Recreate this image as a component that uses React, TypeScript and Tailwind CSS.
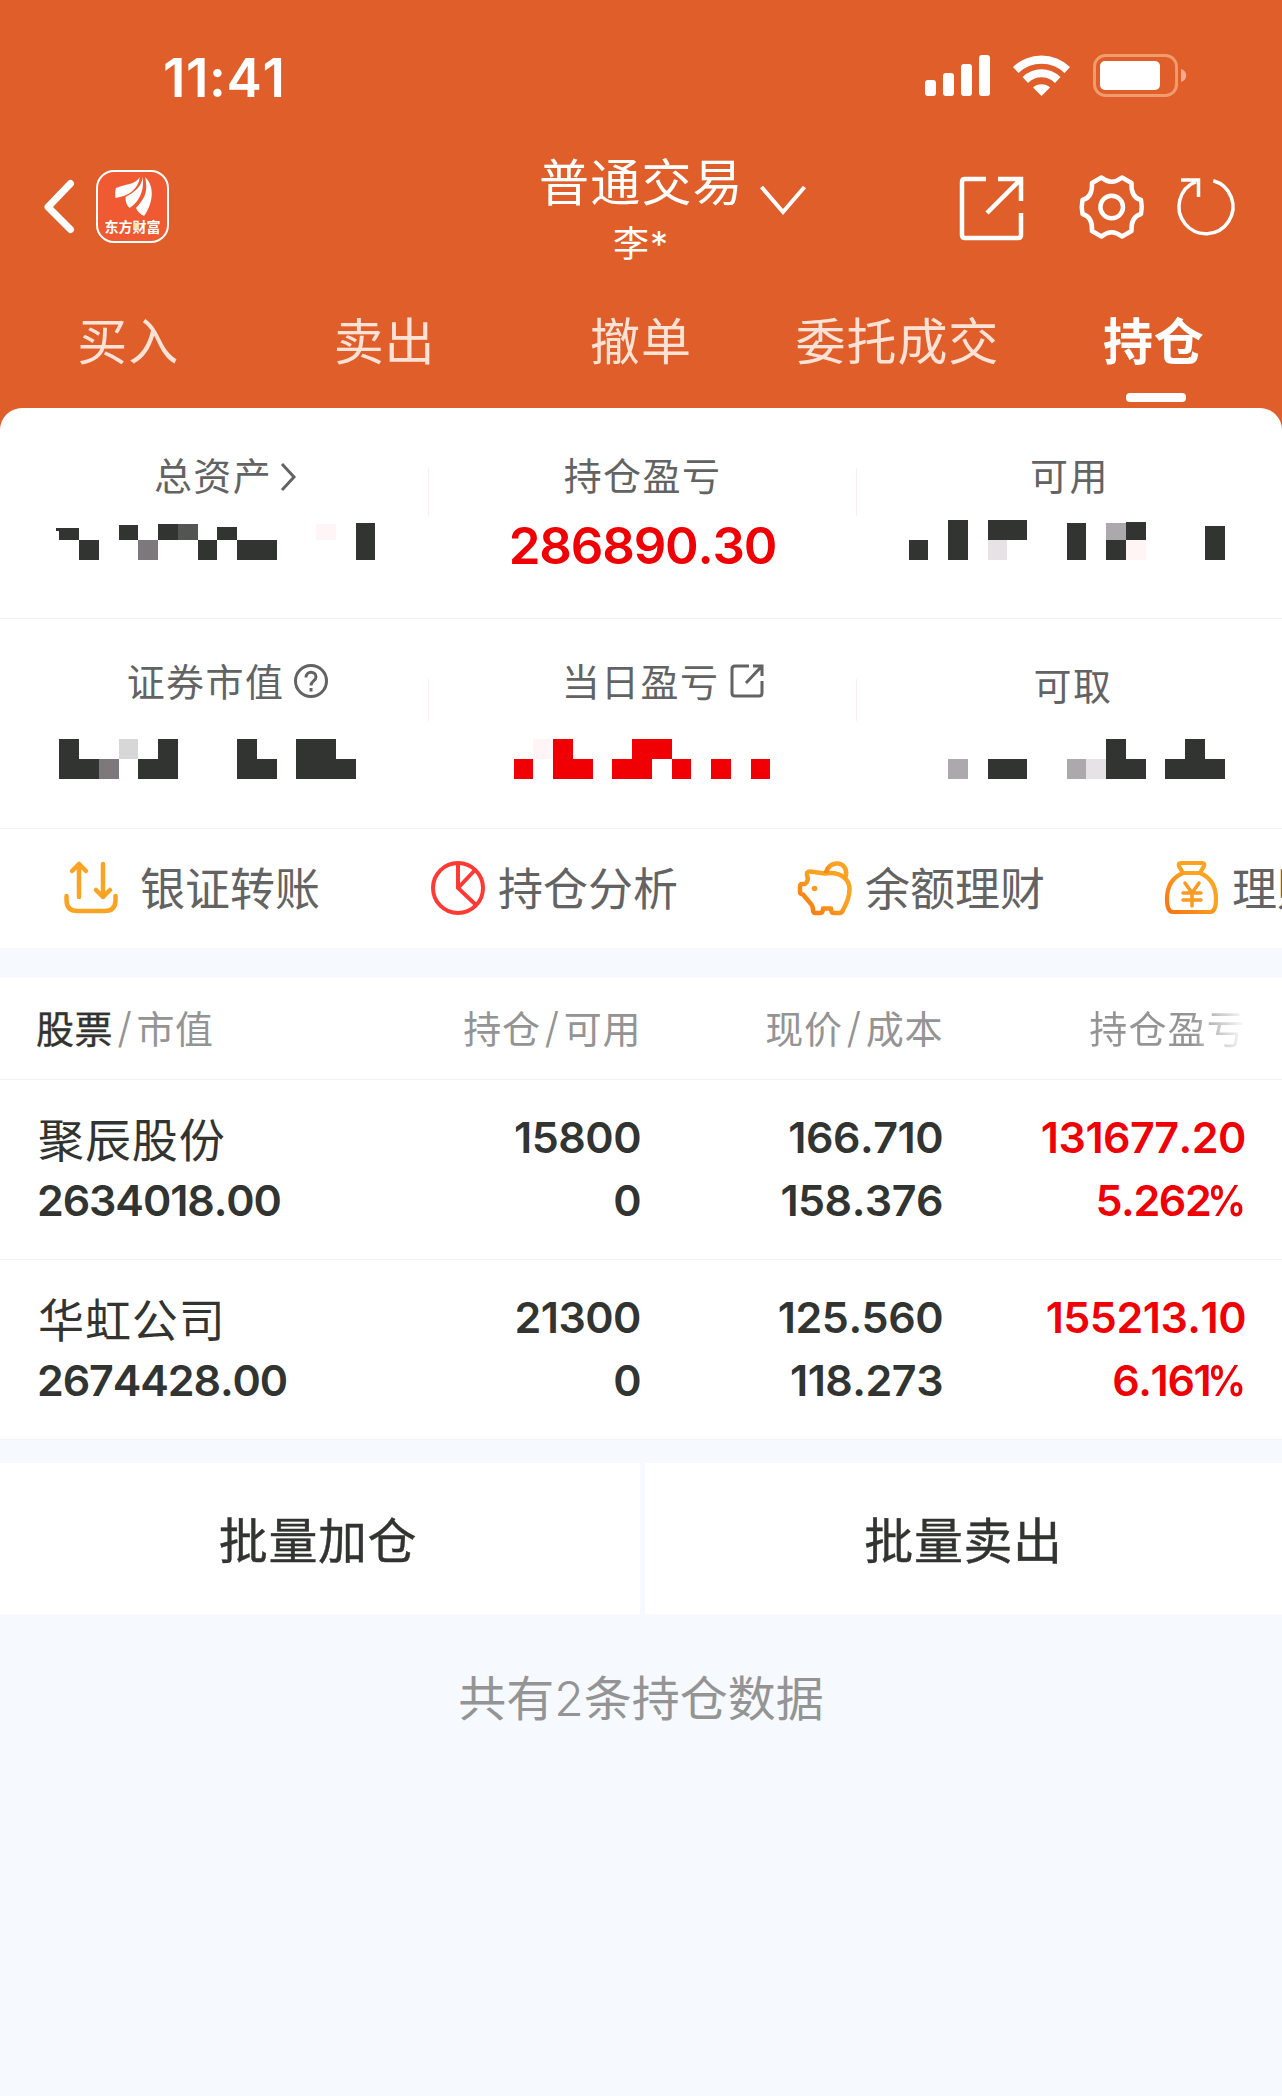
import React from 'react'

const font = "font-['Inter','Noto_Sans_CJK_SC',sans-serif] [font-kerning:none]"

// [x, y, width, height, color] in the coordinates of one summary cell
type Block = [number, number, number, number, string?]

const dark = '#323431'
const red = '#f00005'

const Mosaic: React.FC<{ blocks: Block[]; color?: string }> = ({ blocks, color = dark }) => (
  <svg width="428" height="44" viewBox="0 0 428 44" shapeRendering="crispEdges" className="block">
    {blocks.map(([x, y, w, h, fill], i) => (
      <rect key={i} x={x} y={y} width={w} height={h} fill={fill ?? color} />
    ))}
  </svg>
)

const totalBlocks: Block[] = [
  [56, 8, 3, 3],
  [59, 8, 20, 12],
  [79, 20, 20, 20],
  [119, 5, 19, 15],
  [138, 20, 20, 20, '#7c787b'],
  [158, 4, 20, 16],
  [178, 4, 20, 16, '#535553'],
  [198, 20, 19, 20],
  [217, 7, 20, 13],
  [237, 20, 40, 20],
  [316, 4, 20, 16, '#fff5f6'],
  [356, 3, 19, 37],
]

const usableBlocks: Block[] = [
  [52, 20, 19, 20],
  [91, 0, 20, 40],
  [131, 0, 39, 20],
  [131, 20, 19, 20, '#e6e2e5'],
  [210, 3, 19, 37],
  [249, 3, 20, 17, '#aca9ac'],
  [269, 2, 20, 18],
  [249, 20, 20, 20],
  [269, 20, 20, 20, '#fff5f5'],
  [348, 6, 20, 34],
]

const marketBlocks: Block[] = [
  [59, 0, 20, 40],
  [79, 20, 20, 20],
  [99, 20, 20, 20, '#7c787b'],
  [119, 0, 19, 20, '#d7d7d7'],
  [138, 20, 20, 20],
  [158, 0, 20, 40],
  [237, 0, 20, 40],
  [257, 20, 20, 20],
  [296, 0, 40, 40],
  [336, 20, 20, 20],
]

const todayBlocks: Block[] = [
  [85, 20, 19, 20],
  [104, 0, 20, 20, '#fff5f6'],
  [124, 0, 20, 40],
  [144, 20, 20, 20],
  [183, 20, 40, 20],
  [203, 0, 40, 20],
  [243, 20, 19, 20],
  [282, 20, 20, 20],
  [322, 20, 19, 20],
]

const drawBlocks: Block[] = [
  [91, 20, 20, 20, '#aca9ac'],
  [131, 20, 39, 20],
  [210, 20, 19, 20, '#aca9ac'],
  [229, 20, 20, 20, '#e6e2e5'],
  [249, 0, 20, 40],
  [269, 20, 20, 20],
  [308, 20, 60, 20],
  [328, 0, 20, 20],
]

const StatusBar: React.FC = () => (
  <div className="flex h-[150px] items-start justify-between pl-[163px] pr-[94px] pt-[54px]">
    <div className="text-[53px] font-semibold leading-[48px] tracking-[0.6px]">11:41</div>
    <svg width="264" height="44" viewBox="0 0 264 44" fill="white">
      <rect x="1" y="26" width="11" height="16" rx="3" />
      <rect x="19" y="19" width="11" height="23" rx="3" />
      <rect x="37" y="10" width="11" height="32" rx="3" />
      <rect x="55" y="1" width="11" height="41" rx="3" />
      <path d="M89 13a41 41 0 0 1 57 0l-5.500 6a33 33 0 0 0-46 0z" />
      <path d="M98.500 23a27 27 0 0 1 38 0l-5.500 6a19 19 0 0 0-27 0z" />
      <path d="M109 33.500a13 13 0 0 1 17 0l-8.500 8.500z" />
      <rect x="170.500" y="1.500" width="82" height="40" rx="11" fill="none" stroke="#f09c6c" strokeWidth="3" />
      <rect x="176" y="7" width="60" height="29" rx="5" />
      <path d="M257 15c7 2 7 11 0 13z" fill="#f6a98f" />
    </svg>
  </div>
)

const Header: React.FC = () => (
  <div className="flex h-[130px] items-start">
    <div className="flex w-[530px] pl-[40px] pt-[20px]">
      <svg width="40" height="74" viewBox="0 0 40 74" fill="none" stroke="white" strokeWidth="7" strokeLinecap="round" strokeLinejoin="round">
        <path d="M30.500 13.500 8 37l22.500 22.500" />
      </svg>
      <div className="ml-[16px] flex h-[73px] w-[73px] flex-col items-center rounded-[18px] border-2 border-white bg-[#f05a32]">
        <svg width="40" height="42" viewBox="0 0 40 42" fill="white" className="mt-[4px]">
          <path d="M27 1C22 9 12 8 3 12c-1 3-1 6-.5 10C15 20 25 14 27 1z" />
          <path d="M29.500 1c0 9-9 16-17 20 0 5 1 8 4 11C25 27 32 15 29.500 1z" />
          <path d="M32 1c4 16-2 23-9 31 2 4 4 6 8 8 8-11 12-29 1-39z" />
        </svg>
        <div className="mt-[1px] whitespace-nowrap text-[14px] font-bold leading-[16px]">东方财富</div>
      </div>
    </div>
    <div className="flex w-[290px] flex-col">
      <div className="flex h-[64px] items-center pl-[9px]">
        <span className="mt-[1px] whitespace-nowrap text-[50px] leading-[64px] tracking-[1.2px]">普通交易</span>
        <svg width="48" height="34" viewBox="0 0 48 34" fill="none" stroke="white" strokeWidth="4" className="ml-[15px] mt-[39px]">
          <path d="M2.500 2 24 27 45.500 2" />
        </svg>
      </div>
      <div className="mt-[7px] pl-[83px] text-[36px] leading-[46px] tracking-[1px]">李*</div>
    </div>
    <svg width="290" height="76" viewBox="0 0 290 76" fill="none" stroke="white" strokeWidth="4.500" className="ml-[130px] mt-[18px]">
      <path d="M36 11H15q-3 0-3 3v53q0 3 3 3h53q3 0 3-3V45M48 11h23v22M70 12 37 45" />
      <g strokeLinejoin="round">
        <path d="M151.500 9.500q10 8.500 20.500 0l9.500 5.500c-.5 9 2 15 9.500 17q1.500 7 0 14c-7.500 2-10 8-9.500 17l-9.500 5.500q-10.500-8.500-20.500 0l-9.500-5.500c.5-9-2-15-9.500-17q-1.500-7 0-14c7.500-2 10-8 9.500-17z" />
        <circle cx="161.700" cy="39" r="11.300" />
      </g>
      <path d="M263.300 12.700A27 27 0 1 1 246 13.600M231 12h17.500v17" strokeWidth="3.500" />
    </svg>
  </div>
)

const tabs = ['买入', '卖出', '撤单', '委托成交', '持仓']

const Tabs: React.FC = () => (
  <div className="grid h-[128px] grid-cols-5 pt-[26px]">
    {tabs.map((tab) => {
      const active = tab === '持仓'
      return (
        <div key={tab} className="flex flex-col items-center">
          <span
            className={`whitespace-nowrap text-[50px] leading-[72px] tracking-[0.9px] ${
              active ? 'font-bold text-white' : 'text-[#ffe2d6]'
            }`}
          >
            {tab}
          </span>
          {active && <div className="ml-[4px] mt-[15px] h-[9px] w-[60px] rounded-[4px] bg-white" />}
        </div>
      )
    })}
  </div>
)

interface CellProps {
  label: string
  icon?: React.ReactNode
  labelClass?: string
  children: React.ReactNode
}

const Cell: React.FC<CellProps> = ({ label, icon, labelClass = '', children }) => (
  <div className="flex flex-col">
    <div className={`flex h-[56px] items-center justify-center text-[38px] tracking-[1.4px] text-[#636363] ${labelClass}`}>
      <span className="mt-[2px]">{label}</span>
      {icon}
    </div>
    {children}
  </div>
)

const Divider: React.FC<{ className: string }> = ({ className }) => <div className={`w-px bg-[#f5eff1] ${className}`} />

const Summary: React.FC = () => (
  <div className="rounded-t-[22px] bg-white">
    <div className="grid h-[211px] grid-cols-[428px_1px_427px_1px_425px] border-b border-[#f8eff2] pt-[39px]">
      <Cell
        label="总资产"
        icon={
          <svg width="20" height="32" viewBox="0 0 20 32" fill="none" stroke="#636363" strokeWidth="3" className="ml-[7px] mt-[4px]">
            <path d="M3 3l12 13L3 29" />
          </svg>
        }
        labelClass="pl-[25px]"
      >
        <div className="mt-[17px]">
          <Mosaic blocks={totalBlocks} />
        </div>
      </Cell>
      <Divider className="mt-[21px] h-[48px]" />
      <Cell label="持仓盈亏">
        <div className="mt-[10px] text-center text-[51px] font-semibold leading-[66px] tracking-[-1.2px] text-[#f00005]">286890.30</div>
      </Cell>
      <Divider className="mt-[21px] h-[48px]" />
      <Cell label="可用">
        <div className="mt-[17px]">
          <Mosaic blocks={usableBlocks} />
        </div>
      </Cell>
    </div>
    <div className="grid h-[210px] grid-cols-[428px_1px_427px_1px_425px] border-b border-[#f8eff2] pt-[34px]">
      <Cell
        label="证券市值"
        icon={
          <svg width="36" height="36" viewBox="0 0 36 36" fill="none" stroke="#636363" strokeWidth="3" className="ml-[9px]">
            <circle cx="18" cy="18" r="15.500" />
            <path d="M13 14.500c0-7 10-7 10-.5 0 4-5 4-5 8.500" />
            <path d="M18 25v3.500" />
          </svg>
        }
        labelClass="pl-[28px]"
      >
        <div className="mt-[30px]">
          <Mosaic blocks={marketBlocks} />
        </div>
      </Cell>
      <Divider className="mt-[26px] h-[42px]" />
      <Cell
        label="当日盈亏"
        icon={
          <svg width="36" height="36" viewBox="0 0 36 36" fill="none" stroke="#636363" strokeWidth="3" className="ml-[10px]">
            <path d="M20 3H6Q3 3 3 6v24q0 3 3 3h24q3 0 3-3V18M24 3h9v10M33 3 17 20" />
          </svg>
        }
        labelClass="pl-[42px]"
      >
        <div className="mt-[30px]">
          <Mosaic blocks={todayBlocks} color={red} />
        </div>
      </Cell>
      <Divider className="mt-[26px] h-[42px]" />
      <Cell label="可取" labelClass="pl-[7px] pt-[8px]">
        <div className="mt-[30px]">
          <Mosaic blocks={drawBlocks} />
        </div>
      </Cell>
    </div>
  </div>
)

const TransferIcon = () => (
  <svg width="56" height="56" viewBox="0 0 56 56" fill="none" stroke="#fca321" strokeWidth="4.500" strokeLinecap="round" strokeLinejoin="round">
    <path d="M3.500 36v4q0 11 11 11h27q11 0 11-11v-4M16 37V4M9 11l7-7 7 7M40 4v33M33 30l7 7 7-7" />
  </svg>
)

const PieIcon = () => (
  <svg width="56" height="56" viewBox="0 0 56 56" fill="none" stroke="#ff3a34" strokeWidth="4">
    <circle cx="28" cy="28" r="25" />
    <path d="M28 3v25l18 17M28 28l17-18" />
  </svg>
)

const PigIcon = () => (
  <svg width="56" height="56" viewBox="0 0 56 56" fill="none" stroke="url(#pig)" strokeWidth="4.500" strokeLinejoin="round">
    <defs>
      <linearGradient id="pig" x1="0" y1="1" x2="0.6" y2="0.4">
        <stop offset="0" stopColor="#f97410" />
        <stop offset="1" stopColor="#fca321" />
      </linearGradient>
    </defs>
    <path d="M28 13.500 13 11.500q-4 0-3 4 2 3-.5 7L8 24H5q-2 0-2 3v5q0 2 3 2.500l8 9.500q2 2 2 6 0 3 3 3h4q3 0 3-4.500h8q0 4.500 3 4.500h5q3 0 4-3c4-7 6.500-13 6.500-21 0-10-9.500-18-24.500-15.500z" />
    <path d="M29 13c3-14 22-12 20 2l-1.500 4" />
    <circle cx="17.500" cy="28.500" r="2.800" fill="#fb9a20" stroke="none" />
  </svg>
)

const BagIcon = () => (
  <svg width="56" height="56" viewBox="0 0 56 56" fill="none" stroke="url(#bag)" strokeWidth="4.200" strokeLinejoin="round" strokeLinecap="round">
    <defs>
      <linearGradient id="bag" x1="0" y1="1" x2="0.6" y2="0.4">
        <stop offset="0" stopColor="#f97410" />
        <stop offset="1" stopColor="#fca321" />
      </linearGradient>
    </defs>
    <path d="M17 3h21q3 0 2 3l-4 7H19l-4-7q-1-3 2-3zM19 13C7 18 3 28 3 39c0 8 2 13 6 13h37c4 0 6-5 6-13 0-11-4-21-16-26" />
    <path d="M21 23l7 10 7-10M19 33h18M19 40h18M28 33v13" stroke="#fb9a20" strokeWidth="3.500" />
  </svg>
)

const actions = [
  { label: '银证转账', icon: <TransferIcon />, gap: 'gap-[21px]' },
  { label: '持仓分析', icon: <PieIcon />, gap: 'gap-[12px]' },
  { label: '余额理财', icon: <PigIcon />, gap: 'gap-[12px]' },
  { label: '理财', icon: <BagIcon />, gap: 'gap-[12px]' },
]

const QuickActions: React.FC = () => (
  <div className="flex h-[119px] overflow-hidden bg-white pl-[63px]">
    {actions.map((item) => (
      <div key={item.label} className={`flex w-[367px] shrink-0 items-center whitespace-nowrap pb-[2px] ${item.gap}`}>
        {item.icon}
        <span className="mt-[4px] text-[45px] text-[#636363]">{item.label}</span>
      </div>
    ))}
  </div>
)

const columns = 'grid grid-cols-[340px_301px_302px_303px]'

const rows = [
  { name: '聚辰股份', value: '2634018.00', amount: '15800', usable: '0', price: '166.710', cost: '158.376', profit: '131677.20', rate: '5.262' },
  { name: '华虹公司', value: '2674428.00', amount: '21300', usable: '0', price: '125.560', cost: '118.273', profit: '155213.10', rate: '6.161' },
]

const Pair: React.FC<{ top: string; bottom: React.ReactNode; className?: string }> = ({ top, bottom, className = '' }) => (
  <div className={`flex flex-col text-right ${className}`}>
    <span>{top}</span>
    <span>{bottom}</span>
  </div>
)

const Slash = () => <span className="px-[4px] text-[42px] font-light leading-none">/</span>

const Holdings: React.FC = () => (
  <div className="mt-[30px] bg-white">
    <div className={`${columns} h-[102px] items-center border-b border-[#f5f0f0] pt-[2px] text-[38px] tracking-[0.6px] text-[#949494]`}>
      <div className="pl-[36px]">
        <span className="text-[#323431] [-webkit-text-stroke:0.4px]">股票</span>
        <Slash />
        市值
      </div>
      <div className="text-right">
        持仓
        <Slash />
        可用
      </div>
      <div className="text-right">
        现价
        <Slash />
        成本
      </div>
      <div className="bg-linear-to-r from-[#949494] from-[82%] to-white bg-clip-text text-right tracking-[1.2px] text-transparent">持仓盈亏</div>
    </div>
    {rows.map((row) => (
      <div
        key={row.name}
        className={`${columns} h-[180px] border-b border-[#f6f0f1] pt-[26px] text-[43px] font-semibold leading-[63px] tracking-[-0.5px] text-[#323431]`}
      >
        <div className="flex flex-col pl-[37px]">
          <span className="pl-[1px] pt-[5px] text-[46px] font-normal leading-[58px] tracking-[0.9px]">{row.name}</span>
          <span className="tracking-[-1.1px]">{row.value}</span>
        </div>
        <Pair top={row.amount} bottom={row.usable} />
        <Pair top={row.price} bottom={row.cost} />
        <Pair
          top={row.profit}
          bottom={
            <>
              <span className="tracking-[-1.4px]">{row.rate}</span>
              <span className="-ml-[7px] inline-block origin-right scale-x-90">%</span>
            </>
          }
          className="text-[#f00005]"
        />
      </div>
    ))}
  </div>
)

export default function App() {
  return (
    <div className={`h-[2096px] w-[1282px] overflow-hidden bg-[#f6faff] ${font}`}>
      <div className="bg-[#df5e2a] text-white">
        <StatusBar />
        <Header />
        <Tabs />
        <Summary />
      </div>
      <QuickActions />
      <Holdings />
      <div className="mt-[23px] grid h-[151px] grid-cols-[640px_637px] gap-[5px] text-[49px] tracking-[0.6px] text-[#323431] [-webkit-text-stroke:0.4px]">
        <button className="bg-white pr-[4px] pt-[6px]">批量加仓</button>
        <button className="bg-white pt-[6px]">批量卖出</button>
      </div>
      <div className="mt-[50px] text-center text-[48px] leading-[70px] text-[#949494]">
        共有<span className="font-light">2</span>条持仓数据
      </div>
    </div>
  )
}
